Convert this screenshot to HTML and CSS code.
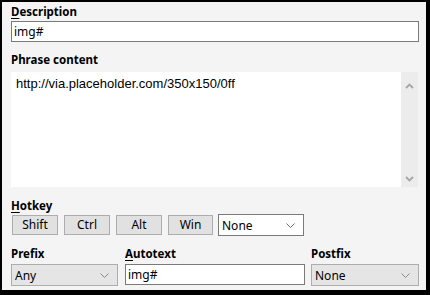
FILE: index.html
```html
<!DOCTYPE html>
<html>
<head>
<meta charset="utf-8">
<link rel="stylesheet" href="styles.css">
</head>
<body>
<div class="panel">
  <div class="label first"><u>D</u>escription</div>
  <div class="input wide">img#</div>

  <div class="label phrase">Phrase content</div>
  <div class="textarea">
    <div class="ta-text">http://via.placeholder.com/350x150/0ff</div>
    <div class="scrollbar">
      <svg class="arrow" width="9" height="6" viewBox="0 0 9 6"><polyline points="1,5 4.5,1.5 8,5" fill="none" stroke="#a6a6a6" stroke-width="1.8"/></svg>
      <svg class="arrow" width="9" height="6" viewBox="0 0 9 6"><polyline points="1,1 4.5,4.5 8,1" fill="none" stroke="#a6a6a6" stroke-width="1.8"/></svg>
    </div>
  </div>

  <div class="label hotkey"><u>H</u>otkey</div>
  <div class="hotrow">
    <div class="btn">Shift</div>
    <div class="btn">Ctrl</div>
    <div class="btn">Alt</div>
    <div class="btn win">Win</div>
    <div class="select white hk">
      <span>None</span>
      <svg width="9" height="5" viewBox="0 0 9 5"><polyline points="0.5,0.5 4.5,4.5 8.5,0.5" fill="none" stroke="#6d6d6d" stroke-width="1"/></svg>
    </div>
  </div>

  <div class="bottom">
    <div class="col prefix">
      <div class="label">Prefix</div>
      <div class="select gray">
        <span>Any</span>
        <svg width="9" height="5" viewBox="0 0 9 5"><polyline points="0.5,0.5 4.5,4.5 8.5,0.5" fill="none" stroke="#8a8a8a" stroke-width="1"/></svg>
      </div>
    </div>
    <div class="col autotext">
      <div class="label"><u>A</u>utotext</div>
      <div class="input">img#</div>
    </div>
    <div class="col postfix">
      <div class="label">Postfix</div>
      <div class="select gray">
        <span>None</span>
        <svg width="9" height="5" viewBox="0 0 9 5"><polyline points="0.5,0.5 4.5,4.5 8.5,0.5" fill="none" stroke="#8a8a8a" stroke-width="1"/></svg>
      </div>
    </div>
  </div>
</div>
</body>
</html>
```
FILE: styles.css
```css
html, body {
  margin: 0;
  padding: 0;
}
body {
  background: #000;
  width: 430px;
  height: 295px;
  overflow: hidden;
  font-family: "Noto Sans", "Open Sans", sans-serif;
  font-size: 12px;
  color: #000;
}
.panel {
  margin: 2px 4px 0 2px;
  height: 288px;
  background: #f4f4f4;
  padding: 0 7px 0 9px;
  box-sizing: border-box;
  display: flex;
  flex-direction: column;
}
.label {
  font-weight: bold;
  font-size: 11.5px;
  line-height: 16px;
  height: 16px;
}
.label u {
  text-decoration-thickness: 1px;
  text-underline-offset: 2px;
}
.label.first {
  padding-top: 2px;
  margin-bottom: 1px;
}
.input {
  height: 21px;
  box-sizing: border-box;
  border: 1px solid #7a7a7a;
  background: #fff;
  padding: 0 0 0 2px;
  line-height: 19px;
  font-size: 12px;
}
.input.wide {
  width: 408px;
}
.label.phrase {
  margin-top: 9px;
  padding-top: 1px;
  margin-bottom: 4px;
}
.textarea {
  width: 407px;
  height: 115px;
  background: #fff;
  display: flex;
}
.ta-text {
  flex: 1;
  font-family: "Liberation Sans", Arial, sans-serif;
  font-size: 13px;
  padding: 4px 0 0 5px;
  line-height: 16px;
}
.scrollbar {
  width: 17px;
  background: #ececec;
  display: flex;
  flex-direction: column;
  justify-content: space-between;
  align-items: center;
  padding: 11px 0 5px;
  box-sizing: border-box;
}
.arrow {
  display: block;
}
.label.hotkey {
  margin-top: 9px;
  padding-top: 2px;
  margin-bottom: 0;
}
.hotrow {
  display: flex;
  align-items: center;
  gap: 6px;
  padding-left: 1px;
  height: 22px;
}
.btn {
  width: 46px;
  height: 20px;
  box-sizing: border-box;
  border: 1px solid #adadad;
  background: #e1e1e1;
  text-align: center;
  line-height: 18px;
  font-size: 12px;
}
.btn.win {
  width: 45px;
}
.select {
  height: 22px;
  box-sizing: border-box;
  display: flex;
  align-items: center;
  justify-content: space-between;
  padding: 0 8px 0 3px;
  font-size: 12px;
}
.select.white {
  background: #fff;
  border: 1px solid #7a7a7a;
}
.select.gray {
  background: #e5e5e5;
  border: 1px solid #adadad;
}
.select svg {
  display: block;
}
.hk {
  width: 86px;
  margin-left: -1px;
}
.bottom {
  display: flex;
  margin-top: 8px;
}
.col .label {
  padding-top: 2px;
  margin-bottom: 2px;
}
.prefix {
  width: 107px;
}
.autotext {
  width: 180px;
  margin-left: 7px;
}
.autotext .input {
  margin-top: 1px;
}
.postfix {
  width: 108px;
  margin-left: 6px;
}
```
